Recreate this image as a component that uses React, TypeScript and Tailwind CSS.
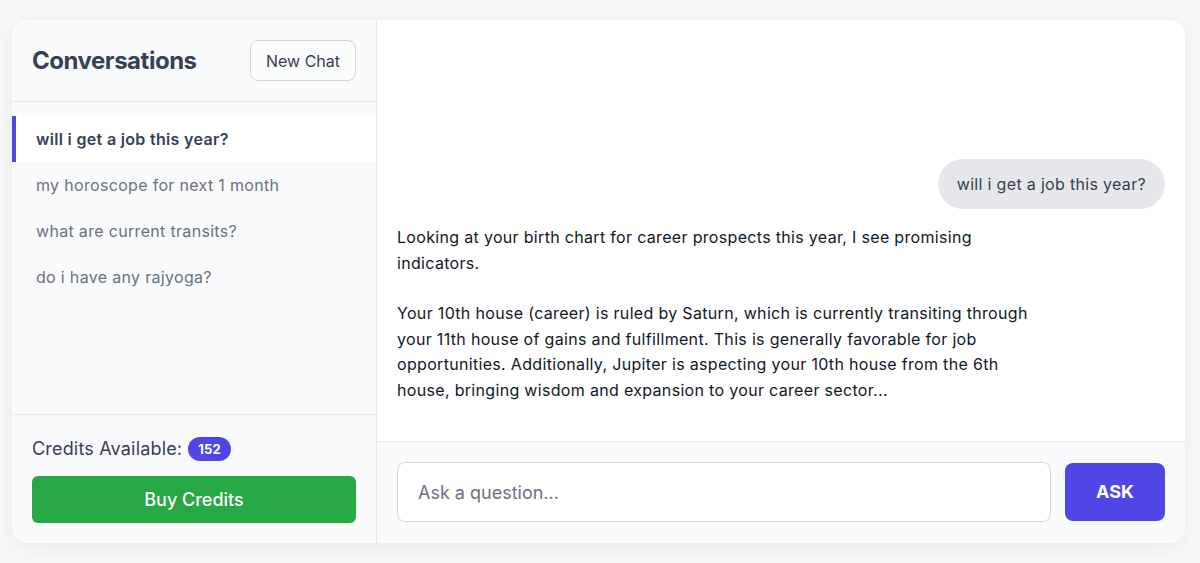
import React from 'react'

const conversations = [
    'will i get a job this year?',
    'my horoscope for next 1 month',
    'what are current transits?',
    'do i have any rajyoga?',
]

export default function App() {
    return (
        <div className="h-screen w-screen bg-[#f6f7f9] px-3 pt-5 pb-5 font-['Inter',sans-serif]">
            <div className="flex h-full w-[1173px] overflow-hidden rounded-2xl bg-white shadow-[0_4px_20px_rgba(0,0,0,0.06)]">

                {/* Sidebar */}
                <div className="flex w-[365px] flex-col border-r border-gray-200 bg-gray-50">
                    <div className="flex items-center justify-between border-b border-gray-200 px-5 py-5">
                        <h2 className="text-2xl font-bold tracking-[-0.02em] text-gray-700">Conversations</h2>
                        <button className="h-[41px] w-[106px] rounded-lg border border-gray-300 bg-white/40 text-base text-gray-700">
                            New Chat
                        </button>
                    </div>

                    <div className="flex-1 pt-3.5">
                        {conversations.map((c, i) => (
                            <div
                                key={c}
                                className={
                                    i === 0
                                        ? 'border-l-4 border-[#4f46e5] bg-white py-3 pl-5 text-base font-semibold leading-[22px] tracking-[0.02em] text-gray-700'
                                        : 'border-l-4 border-transparent py-3 pl-5 text-base leading-[22px] tracking-[0.02em] text-gray-500'
                                }
                            >
                                {c}
                            </div>
                        ))}
                    </div>

                    <div className="border-t border-gray-200 px-5 pt-5 pb-5">
                        <div className="flex h-7 items-center gap-1.5 text-lg tracking-[0.01em] text-gray-700">
                            Credits Available:
                            <span className="rounded-full bg-[#4f46e5] px-2.5 py-0.5 text-[13px] font-bold leading-5 text-white">152</span>
                        </div>
                        <button className="mt-[13px] h-[47px] w-full rounded-md bg-[#28a745] text-lg font-medium text-white">
                            Buy Credits
                        </button>
                    </div>
                </div>

                {/* Main */}
                <div className="flex flex-1 flex-col">
                    <div className="flex flex-1 flex-col justify-end gap-4 px-5 pb-[38px]">
                        <div className="self-end rounded-full bg-gray-200 px-[19px] py-[13px] text-base leading-6 tracking-[0.02em] text-gray-700">
                            will i get a job this year?
                        </div>
                        <div className="max-w-[650px] text-base leading-[25.5px] tracking-[0.02em] text-gray-900">
                            <p>Looking at your birth chart for career prospects this year, I see promising indicators.</p>
                            <p className="mt-[25px]">
                                Your 10th house (career) is ruled by Saturn, which is currently transiting through your 11th house of gains and fulfillment. This is generally favorable for job opportunities. Additionally, Jupiter is aspecting your 10th house from the 6th house, bringing wisdom and expansion to your career sector...
                            </p>
                        </div>
                    </div>

                    <div className="flex items-center gap-3.5 border-t border-gray-200 bg-gray-50 px-5 pt-5 pb-[21px]">
                        <input
                            type="text"
                            placeholder="Ask a question..."
                            className="h-[60px] flex-1 rounded-lg border border-gray-300 bg-white px-5 text-lg text-gray-700 outline-none placeholder:text-gray-500"
                        />
                        <button className="h-[58px] w-[100px] rounded-lg bg-[#4f46e5] text-lg font-bold text-white">
                            ASK
                        </button>
                    </div>
                </div>
            </div>
        </div>
    )
}
